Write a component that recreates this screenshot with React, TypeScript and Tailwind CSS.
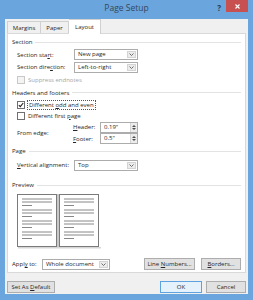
import React from "react";

function Chevron() {
  return (
    <svg width="5" height="3" viewBox="0 0 5 3">
      <path d="M0.5 0.5 L2.5 2.5 L4.5 0.5" fill="none" stroke="#606060" strokeWidth="0.9" />
    </svg>
  );
}

function Select({ value, w }: { value: string; w: string }) {
  return (
    <div className={`${w} h-[11px] flex border border-[#acacac] bg-white`}>
      <span className="flex-1 pl-[3px] leading-[9px]">{value}</span>
      <span className="w-[9px] m-[1px] bg-[#ececec] border border-[#d4d4d4] flex items-center justify-center">
        <Chevron />
      </span>
    </div>
  );
}

function Spin({ value }: { value: string }) {
  return (
    <div className="w-[38px] h-[11px] flex border border-[#acacac] bg-white">
      <span className="flex-1 pl-[3px] leading-[9px]">{value}</span>
      <span className="w-[7px] flex flex-col items-center justify-center gap-[1px] bg-[#ececec] border-l border-[#d4d4d4]">
        <svg width="4" height="2" viewBox="0 0 4 2">
          <path d="M0 2 L2 0 L4 2 Z" fill="#505050" />
        </svg>
        <svg width="4" height="2" viewBox="0 0 4 2">
          <path d="M0 0 L2 2 L4 0 Z" fill="#505050" />
        </svg>
      </span>
    </div>
  );
}

function Group({ title }: { title: string }) {
  return (
    <div className="flex items-center gap-[3px] pl-[4px] pr-[4px]">
      <span>{title}</span>
      <div className="flex-1 h-px bg-[#e3e3e3]" />
    </div>
  );
}

function Check({ checked, disabled }: { checked?: boolean; disabled?: boolean }) {
  return (
    <span
      className={`w-[8px] h-[8px] border flex items-center justify-center ${
        disabled ? "border-[#c8c8c8] bg-[#f4f4f4]" : "border-[#707070] bg-white"
      }`}
    >
      {checked && (
        <svg width="6" height="6" viewBox="0 0 6 6">
          <path d="M0.8 3.2 L2.3 4.7 L5.2 1" fill="none" stroke="#222" strokeWidth="1.1" />
        </svg>
      )}
    </span>
  );
}

function Btn({ children, w, primary }: { children: React.ReactNode; w: string; primary?: boolean }) {
  return (
    <div
      className={`${w} h-[12px] flex items-center justify-center border ${
        primary ? "border-[#5fa2e0] bg-[#e5f1fb]" : "border-[#adadad] bg-[#e1e1e1]"
      }`}
    >
      <span>{children}</span>
    </div>
  );
}

function PagePreview() {
  const groups = [0, 11, 22, 33];
  const page = (x: number) => (
    <g>
      <rect x={x + 0.5} y={0.5} width={39} height={52} fill="#fff" stroke="#7a7a7a" />
      {groups.map((g) => (
        <g key={g} stroke="#6a6a6a" strokeWidth="0.8">
          <line x1={x + 5} x2={x + 35} y1={5 + g} y2={5 + g} />
          <line x1={x + 5} x2={x + 35} y1={8 + g} y2={8 + g} />
          <line x1={x + 5} x2={x + 15} y1={11.5 + g} y2={11.5 + g} />
        </g>
      ))}
    </g>
  );
  return (
    <svg width="86" height="55" viewBox="0 0 86 55">
      <rect x="39" y="0" width="4" height="54" fill="#c9c9c9" />
      <rect x="1" y="53" width="83" height="1.5" fill="#d6d6d6" />
      {page(0)}
      {page(42)}
    </svg>
  );
}

export default function App() {
  return (
    <div className="w-[253px] h-[300px] bg-[#6ba5de] flex flex-col font-['Open_Sans',sans-serif] text-[6px] text-[#262626] leading-none">
      <div className="h-[19px] grid grid-cols-[1fr_auto_1fr] items-start">
        <div />
        <span className="pt-[4px] text-[8.5px] text-[#33475b]">Page Setup</span>
        <div className="flex justify-end items-start pr-[5px]">
          <span className="pt-[4px] mr-[5px] text-[8px] text-[#2b3b4b] font-bold">?</span>
          <div className="w-[22px] h-[12px] bg-[#c75050] flex items-center justify-center">
            <svg width="5" height="5" viewBox="0 0 5 5">
              <path d="M0.5 0.5 L4.5 4.5 M4.5 0.5 L0.5 4.5" stroke="#fff" strokeWidth="1.1" />
            </svg>
          </div>
        </div>
      </div>

      <div className="flex-1 mx-[5px] mb-[6px] bg-[#f0f0f0] flex flex-col">
        <div className="h-[14px] pl-[2px] flex items-end">
          <div className="w-[34px] h-[12px] border border-b-0 border-[#d0d0d0] bg-[#f0f0f0] flex items-center justify-center">
            Margins
          </div>
          <div className="w-[28px] h-[12px] border border-l-0 border-b-0 border-[#d0d0d0] bg-[#f0f0f0] flex items-center justify-center">
            Paper
          </div>
          <div className="w-[32px] h-[15px] -mb-px relative z-10 border border-l-0 border-b-0 border-[#d0d0d0] bg-white flex items-center justify-center">
            Layout
          </div>
        </div>

        <div className="mx-[2px] h-[240px] border border-[#d9d9d9] bg-white flex flex-col pt-[2px]">
          <div className="h-[12px] flex flex-col justify-center">
            <Group title="Section" />
          </div>
          <div className="h-[13px] flex items-center pl-[9px]">
            <span className="w-[57px]">
              Section sta<u>r</u>t:
            </span>
            <Select value="New page" w="w-[64px]" />
          </div>
          <div className="h-[12px] flex items-center pl-[9px]">
            <span className="w-[57px]">
              Section dire<u>c</u>tion:
            </span>
            <Select value="Left-to-right" w="w-[64px]" />
          </div>
          <div className="h-[13px] flex items-center pl-[9px] gap-[3px] text-[#a6a6a6]">
            <Check disabled />
            <span>Suppress endnotes</span>
          </div>
          <div className="h-[13px] flex flex-col justify-center">
            <Group title="Headers and footers" />
          </div>
          <div className="h-[11px] flex items-center pl-[9px] gap-[2px]">
            <Check checked />
            <span className="border border-dotted border-[#555] px-[1px] py-[1px]">
              Different <u>o</u>dd and even
            </span>
          </div>
          <div className="h-[11px] flex items-center pl-[9px] gap-[3px]">
            <Check />
            <span>
              Different first <u>p</u>age
            </span>
          </div>
          <div className="h-[23px] flex items-center pl-[9px]">
            <span className="w-[56px]">From edge:</span>
            <div className="flex flex-col">
              <div className="h-[12px] flex items-center">
                <span className="w-[27px]">
                  <u>H</u>eader:
                </span>
                <Spin value='0.19"' />
              </div>
              <div className="h-[11px] flex items-center">
                <span className="w-[27px]">
                  <u>F</u>ooter:
                </span>
                <Spin value='0.5"' />
              </div>
            </div>
          </div>
          <div className="h-[14px] flex flex-col justify-center">
            <Group title="Page" />
          </div>
          <div className="h-[14px] flex items-center pl-[9px]">
            <span className="w-[57px]">
              <u>V</u>ertical alignment:
            </span>
            <Select value="Top" w="w-[64px]" />
          </div>
          <div className="h-[12px] mt-[7px] flex flex-col justify-center">
            <Group title="Preview" />
          </div>
          <div className="pl-[9px] mt-[3px] h-[55px]">
            <PagePreview />
          </div>
          <div className="h-[12px] mt-[9px] flex items-center pl-[4px] pr-[4px]">
            <span className="w-[30px]">
              Appl<u>y</u> to:
            </span>
            <Select value="Whole document" w="w-[68px]" />
            <div className="flex-1" />
            <Btn w="w-[51px]">
              Line <u>N</u>umbers...
            </Btn>
            <div className="w-[6px]" />
            <Btn w="w-[40px]">
              <u>B</u>orders...
            </Btn>
          </div>
        </div>

        <div className="mt-[8px] flex items-center px-[2px]">
          <Btn w="w-[48px]">
            Set As <u>D</u>efault
          </Btn>
          <div className="flex-1" />
          <Btn w="w-[42px]" primary>
            OK
          </Btn>
          <div className="w-[4px]" />
          <Btn w="w-[40px]">Cancel</Btn>
        </div>
      </div>
    </div>
  );
}
